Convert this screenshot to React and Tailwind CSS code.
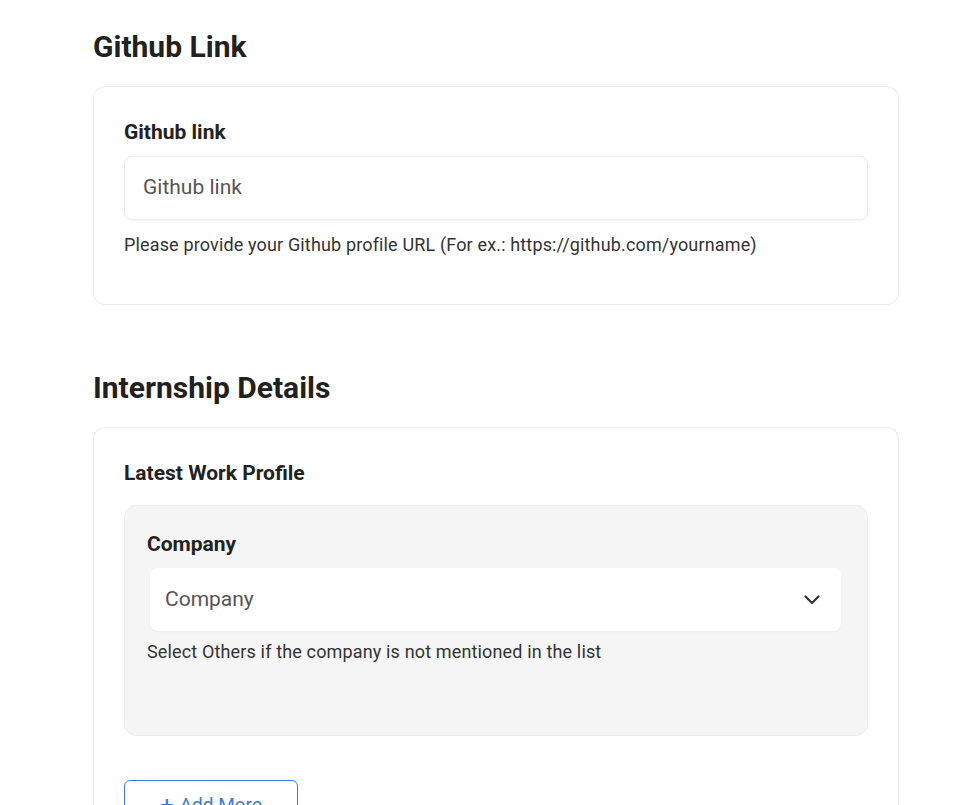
import React from "react";

export default function App() {
  return (
    <div className="min-h-[805px] bg-white font-['Roboto',sans-serif] text-[#212121]">
      <div className="ml-[93px] w-[806px] pt-[30px]">
        <h2 className="text-[30px] leading-[34px] font-bold text-[#212121]">Github Link</h2>
        <div className="mt-[22px] rounded-[12px] border border-[#ebebeb] px-[30px] pt-[33px] pb-[47px]">
          <div className="text-[21px] leading-[24px] font-bold text-[#222]">Github link</div>
          <div className="mt-[12px] flex h-[64px] items-center rounded-[8px] border border-[#ececec] bg-white px-[18px] shadow-[0_1px_3px_rgba(0,0,0,0.05)]">
            <span className="text-[21px] text-[#555]">Github link</span>
          </div>
          <div className="mt-[13px] text-[18px] leading-[24px] tracking-[0.15px] text-[#333]">
            Please provide your Github profile URL (For ex.: https://github.com/yourname)
          </div>
        </div>

        <h2 className="mt-[66px] text-[30px] leading-[34px] font-bold text-[#212121]">Internship Details</h2>
        <div className="mt-[22px] rounded-t-[12px] border border-b-0 border-[#ebebeb] px-[30px] pt-[33px] pb-[40px]">
          <div className="text-[21px] leading-[24px] font-bold text-[#222]">Latest Work Profile</div>
          <div className="mt-[20px] h-[231px] rounded-[12px] border border-[#ececec] bg-[#f5f5f5] px-[22px] pt-[26px]">
            <div className="text-[21px] leading-[24px] font-bold text-[#222]">Company</div>
            <div className="ml-[3px] mr-[4px] mt-[12px] flex h-[63px] items-center justify-between rounded-[8px] bg-white pl-[15px] pr-[21px] shadow-[0_1px_2px_rgba(0,0,0,0.04)]">
              <span className="text-[21px] text-[#555]">Company</span>
              <svg width="16" height="10" viewBox="0 0 16 10" fill="none" stroke="#333" strokeWidth="2.2" strokeLinecap="round" strokeLinejoin="round">
                <path d="M1.5 1.5L8 8l6.5-6.5" />
              </svg>
            </div>
            <div className="mt-[9px] text-[18px] leading-[24px] tracking-[0.15px] text-[#333]">
              Select Others if the company is not mentioned in the list
            </div>
          </div>
          <button className="mt-[44px] flex h-[50px] w-[174px] items-center justify-center gap-[6px] rounded-[6px] border border-[#3b7dd8] bg-white text-[19px] text-[#3b7dd8]">
            <span className="text-[24px] leading-none">+</span>
            <span>Add More</span>
          </button>
        </div>
      </div>
    </div>
  );
}
